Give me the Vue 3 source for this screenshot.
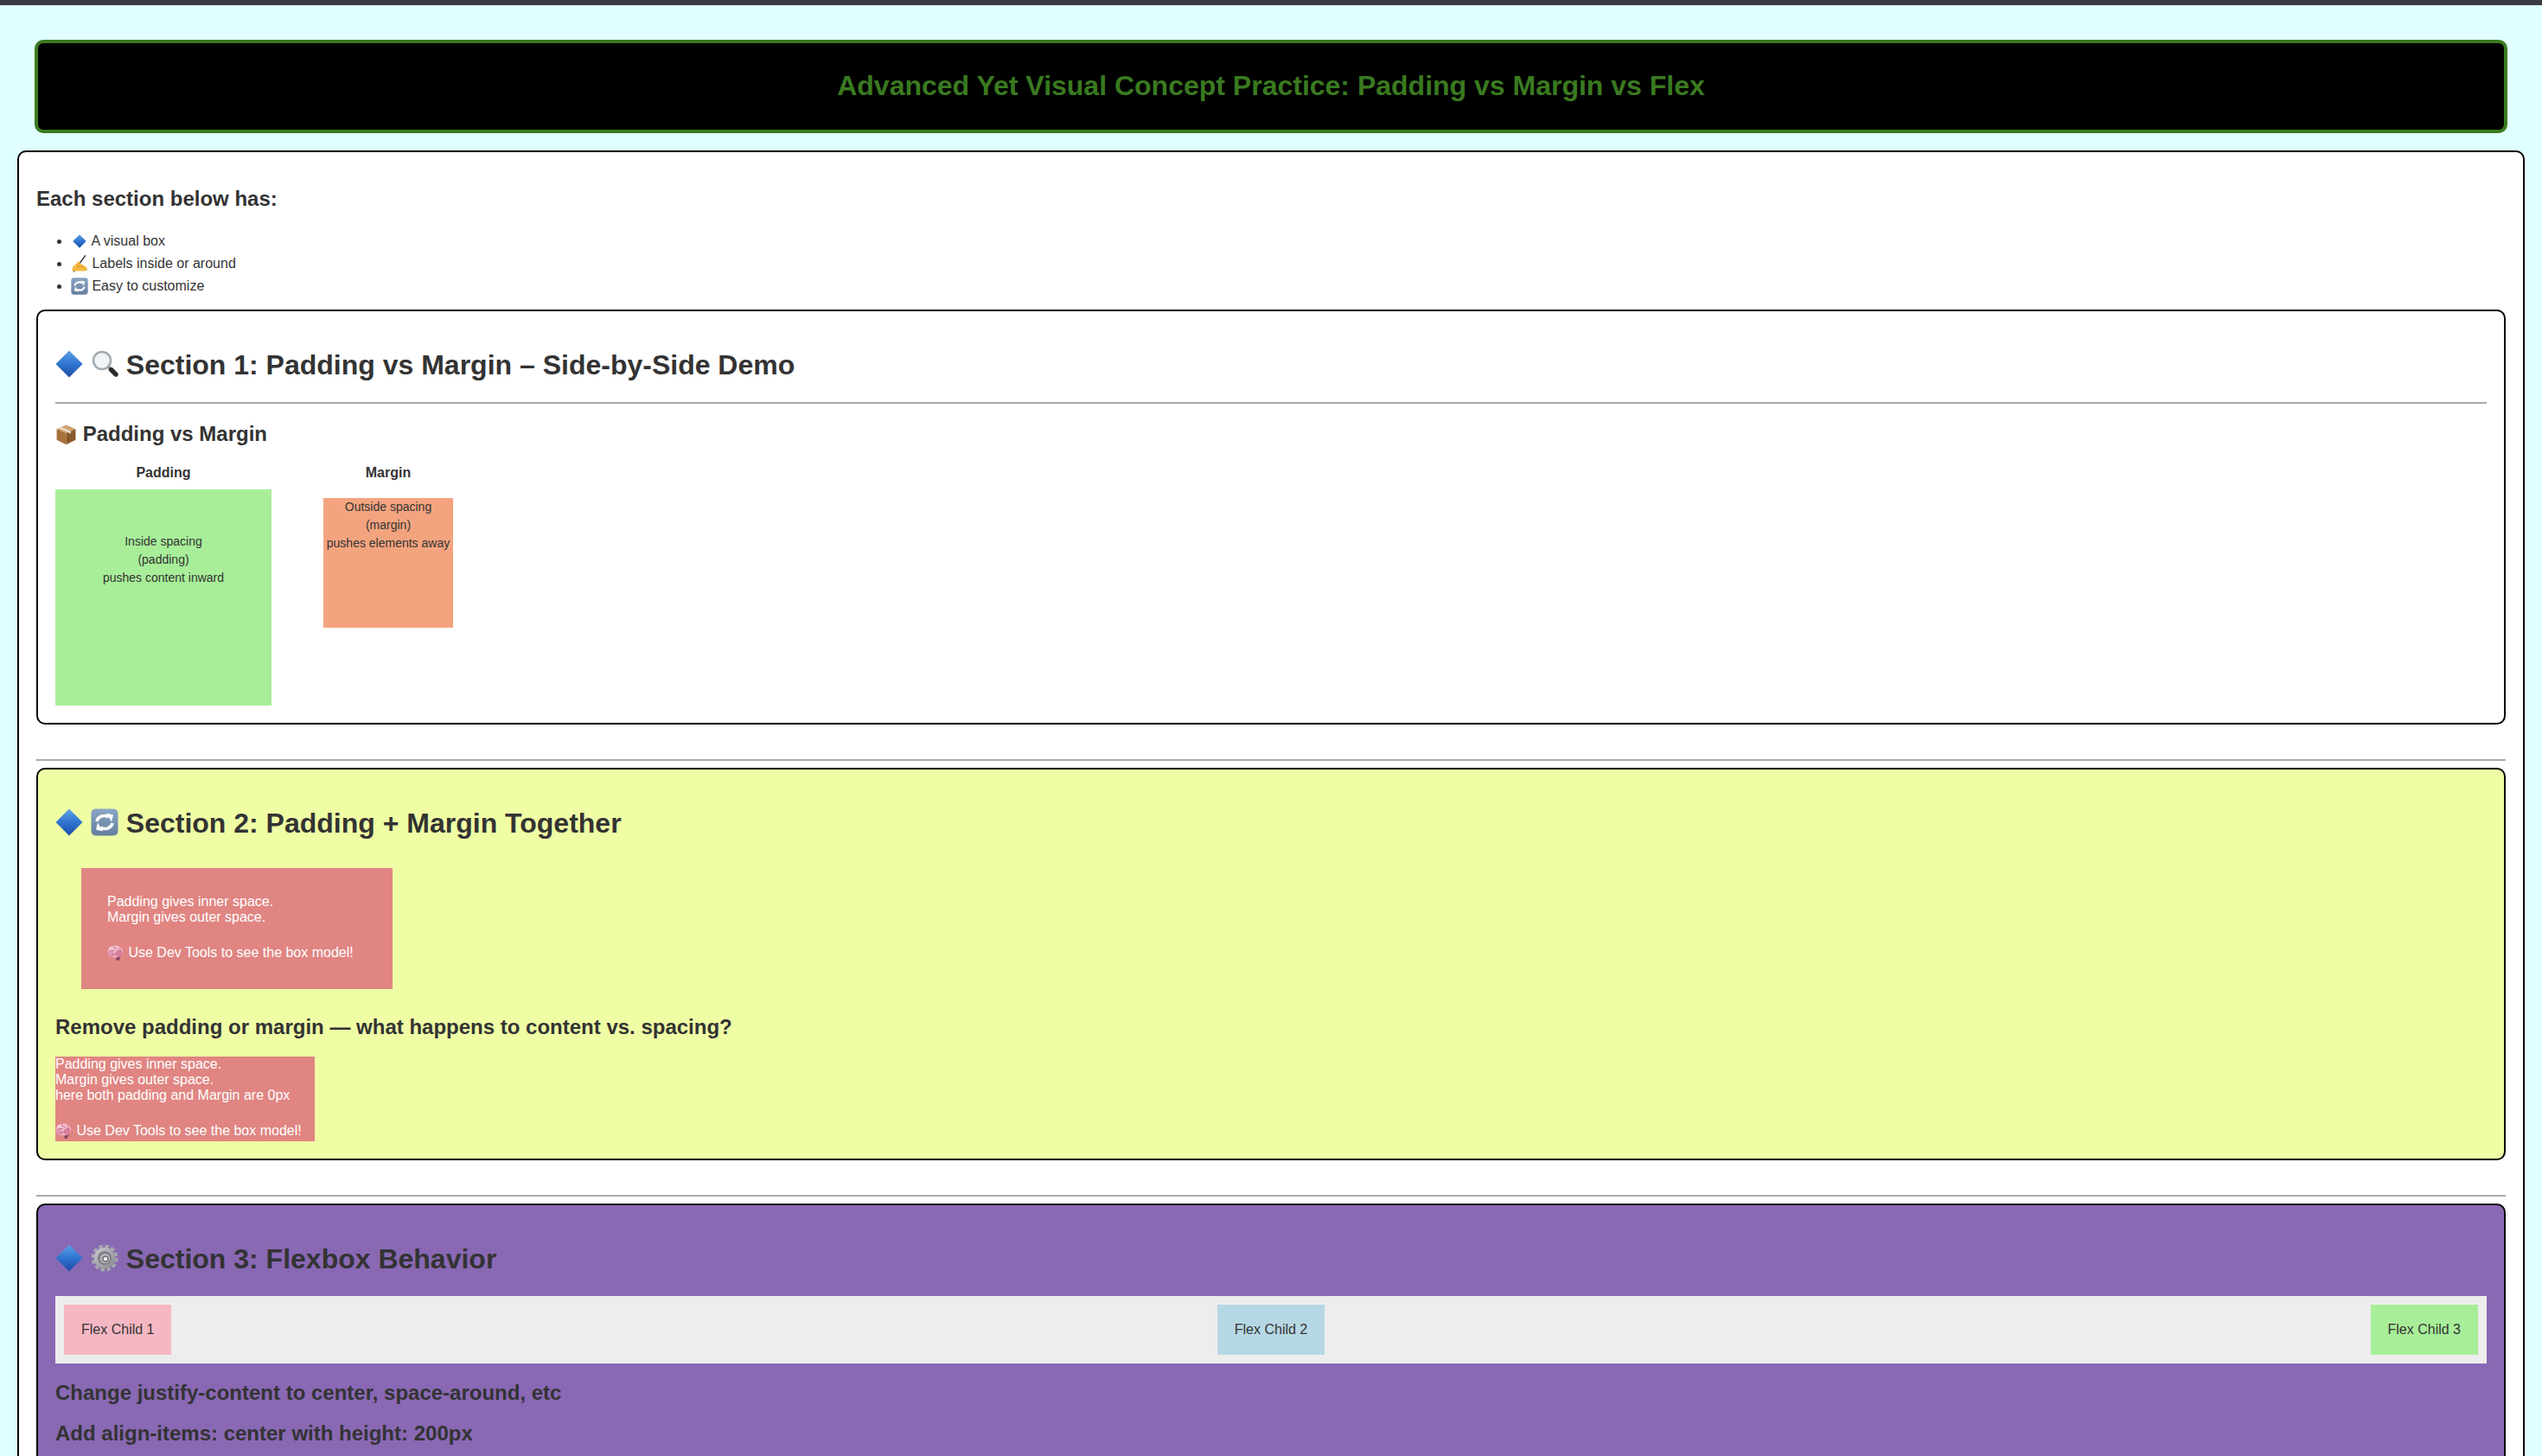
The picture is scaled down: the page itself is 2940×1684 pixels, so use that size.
<script setup>
const introItems = [
  { icon: 'diamond', text: 'A visual box' },
  { icon: 'writing', text: 'Labels inside or around' },
  { icon: 'refresh', text: 'Easy to customize' },
]
const flexChildren = [
  { label: 'Flex Child 1', color: 'pink' },
  { label: 'Flex Child 2', color: 'blue' },
  { label: 'Flex Child 3', color: 'green' },
]
</script>

<template>
  <svg class="emoji-defs" aria-hidden="true">
    <defs>
      <linearGradient id="g-diamond" x1="0" y1="0" x2="0" y2="1">
        <stop offset="0" stop-color="#5fa3e6" />
        <stop offset="0.5" stop-color="#2f74cf" />
        <stop offset="1" stop-color="#1c4da8" />
      </linearGradient>
      <linearGradient id="g-refresh" x1="0" y1="0" x2="0" y2="1">
        <stop offset="0" stop-color="#8aa5c4" />
        <stop offset="1" stop-color="#667f9f" />
      </linearGradient>
      <linearGradient id="g-gear" x1="0" y1="0" x2="1" y2="1">
        <stop offset="0" stop-color="#c9cbd0" />
        <stop offset="1" stop-color="#85878d" />
      </linearGradient>
    </defs>
    <symbol id="e-diamond" viewBox="0 0 32 32">
      <path d="M16 0.5 31.5 16 16 31.5 0.5 16Z" fill="url(#g-diamond)" />
    </symbol>
    <symbol id="e-search" viewBox="0 0 32 32">
      <circle cx="13" cy="12" r="10" fill="#f2f4f6" stroke="#a3abb2" stroke-width="2.6" />
      <path d="M20.5 19.5 23 22" stroke="#8e959b" stroke-width="3.5" />
      <path d="M23.5 22.5 29 28" stroke="#2b2d30" stroke-width="5.4" stroke-linecap="round" />
    </symbol>
    <symbol id="e-writing" viewBox="0 0 32 32">
      <path d="M27 0.5 5 31" stroke="#1c1c1c" stroke-width="2" />
      <path d="M2 29c0-5 2-9 7-12 2-2 4-6 6-6 2 1 2 4 2 5 4 1 9 4 12 7 2 2 2 5-1 6-6 1-18 1-26 0Z" fill="#f4b942" />
      <path d="M9 24c4-2 9-3 15-2M11 19c2 1 4 1 6 0" stroke="#d98f22" stroke-width="1.2" fill="none" />
    </symbol>
    <symbol id="e-refresh" viewBox="0 0 32 32">
      <rect x="0.5" y="0.5" width="31" height="31" rx="5" fill="url(#g-refresh)" />
      <path d="M7 15C8 9.5 15 6.5 20.5 10" stroke="#fff" stroke-width="3.6" fill="none" />
      <path d="M18 5.5 26 7.5 24 15.5Z" fill="#fff" />
      <path d="M25 17C24 22.5 17 25.5 11.5 22" stroke="#fff" stroke-width="3.6" fill="none" />
      <path d="M14 26.5 6 24.5 8 16.5Z" fill="#fff" />
    </symbol>
    <symbol id="e-package" viewBox="0 0 32 32">
      <path d="M16 2 30 8 16 14 2 8Z" fill="#d1a06d" />
      <path d="M2 8 16 14V31L2 24Z" fill="#a8703a" />
      <path d="M30 8 16 14V31L30 24Z" fill="#8a5a2c" />
      <path d="M9 5 23 11 23 15 19 13 5.5 7Z" fill="#e6dccb" />
    </symbol>
    <symbol id="e-brain" viewBox="0 0 32 32">
      <path d="M19 22 25 22 22 30C20 31 17 30 16 28Z" fill="#8f4562" />
      <ellipse cx="15" cy="14" rx="14.5" ry="10.5" fill="#eeaac0" />
      <circle cx="9" cy="10" r="6" fill="#f5c6d5" />
      <circle cx="17" cy="8" r="5.5" fill="#f3bccd" />
      <circle cx="7" cy="18" r="5.5" fill="#e597b1" />
      <circle cx="22" cy="17" r="6" fill="#d9809e" />
      <path d="M4 13c4-3 7 1 10-2M11 5c2 3 6 2 8 5M8 20c4 1 6-3 10-2M22 9c2 2 2 5 4 6" stroke="#b4577a" stroke-width="1.4" fill="none" />
    </symbol>
    <symbol id="e-gear" viewBox="0 0 32 32">
      <circle cx="16" cy="16" r="13.5" fill="none" stroke="#a6a8ad" stroke-width="4" stroke-dasharray="4.4 2.67" />
      <circle cx="16" cy="16" r="12.2" fill="url(#g-gear)" />
      <circle cx="16" cy="16" r="8" fill="#7f8186" />
      <circle cx="16.5" cy="16.5" r="5.6" fill="#b9bbc0" />
      <circle cx="17" cy="17" r="3" fill="#f1f1f3" stroke="#6a6c71" stroke-width="1.4" />
    </symbol>
  </svg>

  <div class="topbar"></div>

  <header class="page-title">
    <h1>Advanced Yet Visual Concept Practice: Padding vs Margin vs Flex</h1>
  </header>

  <main class="outer">
    <h3 class="intro">Each section below has:</h3>
    <ul class="intro-list">
      <li v-for="item in introItems" :key="item.text">
        <svg class="emoji-sm" :class="{ 'emoji-plain': item.icon === 'diamond' }"><use :href="'#e-' + item.icon" /></svg>
        {{ item.text }}
      </li>
    </ul>

    <section class="demo">
      <h2 class="with-rule"><svg class="emoji"><use href="#e-diamond" /></svg> <svg class="emoji"><use href="#e-search" /></svg> Section 1: Padding vs Margin – Side-by-Side Demo</h2>
      <hr class="rule" />
      <h3 class="sub"><svg class="emoji-box"><use href="#e-package" /></svg> Padding vs Margin</h3>
      <div class="compare">
        <div class="compare-col">
          <p class="compare-label">Padding</p>
          <div class="padding-box">Inside spacing<br />(padding)<br />pushes content inward</div>
        </div>
        <div class="compare-col">
          <p class="compare-label">Margin</p>
          <div class="margin-box">Outside spacing<br />(margin)<br />pushes elements away</div>
        </div>
      </div>
    </section>

    <hr class="divider" />

    <section class="demo demo-yellow">
      <h2><svg class="emoji"><use href="#e-diamond" /></svg> <svg class="emoji"><use href="#e-refresh" /></svg> Section 2: Padding + Margin Together</h2>
      <div class="note note-spaced">
        Padding gives inner space.<br />
        Margin gives outer space.
        <span class="tip"><svg class="emoji-sm"><use href="#e-brain" /></svg> Use Dev Tools to see the box model!</span>
      </div>
      <h3 class="question">Remove padding or margin — what happens to content vs. spacing?</h3>
      <div class="note note-flat">
        Padding gives inner space.<br />
        Margin gives outer space.<br />
        here both padding and Margin are 0px
        <span class="tip"><svg class="emoji-sm"><use href="#e-brain" /></svg> Use Dev Tools to see the box model!</span>
      </div>
    </section>

    <hr class="divider" />

    <section class="demo demo-purple">
      <h2><svg class="emoji"><use href="#e-diamond" /></svg> <svg class="emoji"><use href="#e-gear" /></svg> Section 3: Flexbox Behavior</h2>
      <div class="flex-row">
        <div v-for="child in flexChildren" :key="child.label" class="flex-child" :class="child.color">{{ child.label }}</div>
      </div>
      <h3 class="hint">Change justify-content to center, space-around, etc</h3>
      <h3 class="hint">Add align-items: center with height: 200px</h3>
    </section>
  </main>
</template>

<style>
html {
  overflow: hidden;
}
body {
  background: #e0ffff;
  font-family: "Liberation Sans", Arial, sans-serif;
  color: #333;
}
</style>

<style scoped>
h3 {
  line-height: 27px;
}
.emoji-defs {
  position: absolute;
  width: 0;
  height: 0;
}
.emoji {
  width: 1em;
  height: 1em;
  vertical-align: -0.12em;
}
.emoji-box {
  width: 25px;
  height: 25px;
  vertical-align: -5px;
}
.emoji-sm {
  width: 20px;
  height: 20px;
  vertical-align: -5px;
}
.emoji-plain {
  width: 16px;
  height: 16px;
  margin: 0 2px 0 2px;
  vertical-align: -3px;
}

.topbar {
  height: 6px;
  background: #3a3a42;
}

.page-title {
  margin: 40px 40px 20px;
  padding: 31px 0 32px;
  background: #000;
  border: 4px solid #3a7a20;
  border-radius: 10px;
  text-align: center;
}
.page-title h1 {
  margin: 0;
  font-size: 32px;
  line-height: 37px;
  color: #3a7a20;
}

.outer {
  margin: 0 20px;
  padding: 0 20px 20px;
  background: #fff;
  border: 2px solid #000;
  border-radius: 10px;
}

.intro {
  margin: 0;
  padding-top: 40px;
  font-size: 24px;
}
.intro-list {
  margin: 23px 0 14px;
  padding-left: 40px;
  font-size: 16px;
  line-height: 26px;
}

.demo {
  padding: 20px;
  border: 2px solid #000;
  border-radius: 10px;
  background: #fff;
}
.demo-yellow {
  background: #effea5;
}
.demo-purple {
  background: #8968b4;
}
.demo h2 {
  margin: 24px 0 33px;
  font-size: 32px;
  line-height: 37px;
}
.demo h2.with-rule,
.demo-purple h2 {
  margin-bottom: 24px;
}

.rule {
  height: 2px;
  margin: 0 0 21px;
  border: none;
  background: #aaa;
}
.divider {
  height: 2px;
  margin: 40px 0 8px;
  border: none;
  background: #aaa;
}

.sub {
  margin: 0 0 23px;
  font-size: 24px;
}
.compare {
  display: flex;
  gap: 50px;
  align-items: flex-start;
  font-size: 14px;
}
.compare-col {
  text-align: center;
}
.compare-label {
  margin: 0;
  padding-bottom: 10px;
  font-size: 16px;
  line-height: 18px;
  font-weight: bold;
}
.padding-box {
  box-sizing: border-box;
  width: 250px;
  height: 250px;
  padding: 50px;
  background: #a8ee99;
  line-height: 21px;
  white-space: nowrap;
}
.margin-box {
  width: 150px;
  height: 150px;
  margin: 10px;
  background: #f3a47f;
  line-height: 21px;
  white-space: nowrap;
}

.note {
  width: 300px;
  font-size: 16px;
  line-height: 18px;
  color: #fff;
  background: #e08582;
}
.note-spaced {
  margin: 30px;
  padding: 30px;
}
.tip {
  display: block;
  margin-top: 18px;
  padding-top: 2px;
  line-height: 24px;
}
.question {
  margin: 30px 0 21px;
  font-size: 24px;
}

.flex-row {
  display: flex;
  justify-content: space-between;
  padding: 10px;
  background: #ededed;
}
.flex-child {
  padding: 20px;
  font-size: 16px;
  line-height: 18px;
}
.pink {
  background: #f5b7c3;
}
.blue {
  background: #b6d8e4;
}
.green {
  background: #a8ee99;
}
.hint {
  margin: 20px 0;
  font-size: 24px;
}
</style>
